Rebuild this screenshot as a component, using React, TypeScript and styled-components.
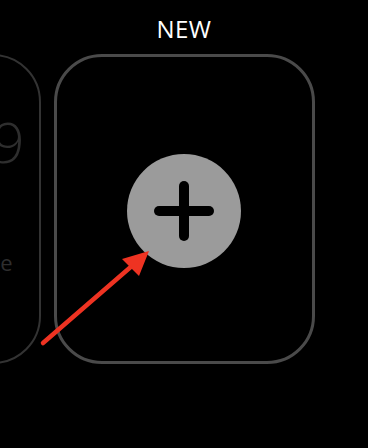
import React from "react";
import styled, { createGlobalStyle } from "styled-components";

const GlobalStyle = createGlobalStyle`
  html, body {
    margin: 0;
    padding: 0;
    background: #000;
    overflow: hidden;
  }
`;

const Screen = styled.div`
  position: relative;
  width: 368px;
  height: 448px;
  padding-top: 17px;
  box-sizing: border-box;
  background: #000;
  overflow: hidden;
  font-family: "Open Sans", "Liberation Sans", sans-serif;
`;

Screen.displayName = "Screen";

const Title = styled.div`
  color: #fff;
  font-size: 24px;
  line-height: 24px;
  font-weight: 400;
  text-align: center;
  letter-spacing: 0.5px;
  margin-bottom: 13px;
`;

Title.displayName = "Title";

const Carousel = styled.div`
  display: grid;
  grid-template-columns: minmax(0, 1fr) 261px minmax(0, 1fr);
  column-gap: 13px;
`;

Carousel.displayName = "Carousel";

interface IFaceCardProps {
  dim?: boolean;
}

const FaceCard = styled.div<IFaceCardProps>`
  box-sizing: border-box;
  height: 310px;
  width: ${({ dim }) => (dim ? "260px" : "261px")};
  border: ${({ dim }) => (dim ? "2.5px solid #333" : "3px solid #4a4a4a")};
  border-radius: 48px;
  justify-self: ${({ dim }) => (dim ? "unsafe end" : "stretch")};
  display: flex;
  flex-direction: column;
  align-items: ${({ dim }) => (dim ? "flex-end" : "center")};
  justify-content: ${({ dim }) => (dim ? "flex-start" : "center")};
  padding-top: 3px;
`;

FaceCard.displayName = "FaceCard";

const FaceTime = styled.div`
  color: #2e2e2e;
  font-size: 56px;
  line-height: 56px;
  font-weight: 300;
  margin-top: 54px;
  margin-right: 14px;
`;

FaceTime.displayName = "FaceTime";

const FaceDate = styled.div`
  color: #2e2e2e;
  font-size: 22px;
  line-height: 22px;
  margin-top: 82px;
  margin-right: 26px;
`;

FaceDate.displayName = "FaceDate";

const AddButton = styled.button`
  width: 114px;
  height: 114px;
  border-radius: 50%;
  border: 0;
  padding: 0;
  background: #9b9b9b;
  display: flex;
  align-items: center;
  justify-content: center;
  cursor: pointer;
`;

AddButton.displayName = "AddButton";

const Overlay = styled.svg`
  position: absolute;
  left: 0;
  top: 0;
  pointer-events: none;
`;

Overlay.displayName = "Overlay";

const PlusIcon: React.FC = () => (
  <svg width="60" height="60" viewBox="0 0 60 60">
    <line x1="5" y1="30" x2="55" y2="30" stroke="#000" strokeWidth="10" strokeLinecap="round" />
    <line x1="30" y1="5" x2="30" y2="55" stroke="#000" strokeWidth="10" strokeLinecap="round" />
  </svg>
);

const App: React.FC = () => (
  <Screen>
    <GlobalStyle />
    <Title>NEW</Title>
    <Carousel>
      <FaceCard dim>
        <FaceTime>10:09</FaceTime>
        <FaceDate>Tue</FaceDate>
      </FaceCard>
      <FaceCard>
        <AddButton type="button" aria-label="Add watch face">
          <PlusIcon />
        </AddButton>
      </FaceCard>
    </Carousel>
    <Overlay width="368" height="448" viewBox="0 0 368 448">
      <line x1="43" y1="343" x2="133" y2="265" stroke="#ee3322" strokeWidth="4.5" strokeLinecap="round" />
      <polygon points="149,251 122,259 139,276" fill="#ee3322" />
    </Overlay>
  </Screen>
);

export default App;
